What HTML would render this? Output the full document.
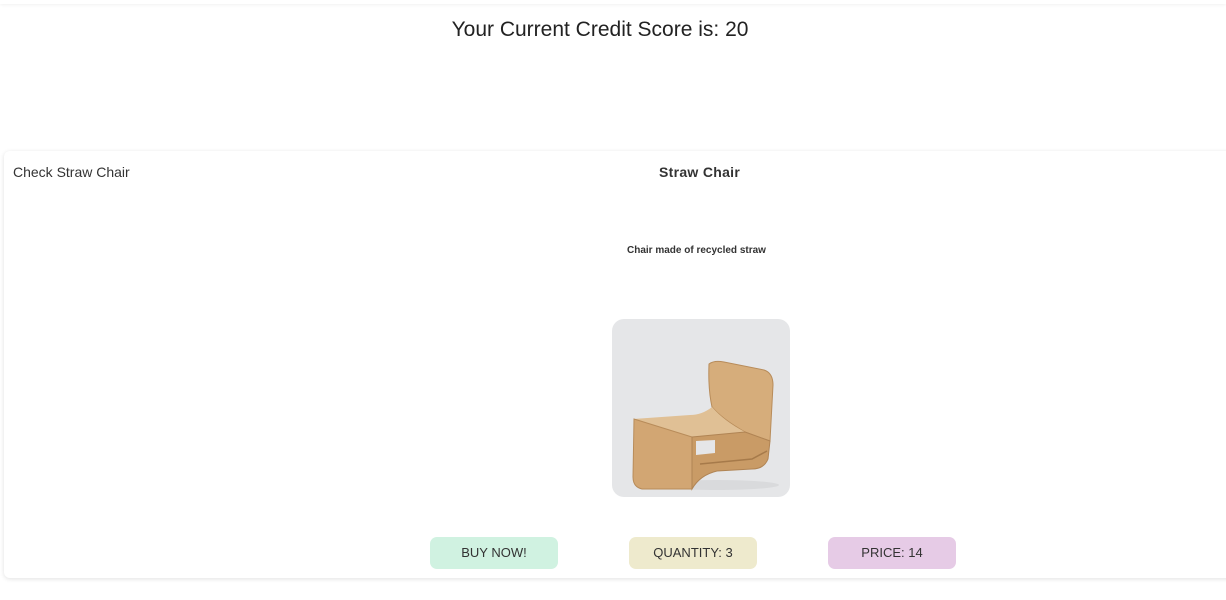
<!DOCTYPE html>
<html><head><meta charset="utf-8"><style>
html,body{margin:0;padding:0;background:#fff;width:1226px;height:600px;overflow:hidden;font-family:"Liberation Sans",sans-serif;color:#222}
.top{position:absolute;left:0;top:0;width:1226px;height:4px;box-shadow:0 1px 3px rgba(0,0,0,.06)}
h1{position:absolute;top:18px;left:0;width:1200px;text-align:center;margin:0;font-weight:normal;font-size:21px;color:#222}
.card{position:absolute;left:4px;top:151px;width:1240px;height:427px;background:#fff;border-radius:6px;box-shadow:0 1px 5px rgba(0,0,0,.12)}
.lbl{position:absolute;left:9px;top:13px;font-size:14px;color:#333}
.title{position:absolute;left:655px;top:13px;font-size:14px;font-weight:bold;color:#333;letter-spacing:.3px}
.desc{position:absolute;left:623px;top:94px;font-size:10px;font-weight:bold;color:#333}
.img{position:absolute;left:608px;top:168px;width:178px;height:178px;border-radius:12px;background:#e5e6e8;overflow:hidden}
.btn{position:absolute;top:386px;width:128px;height:32px;border-radius:7px;font-size:13px;color:#333;text-align:center;line-height:32px}
</style></head><body>
<div class="top"></div>
<h1>Your Current Credit Score is: 20</h1>
<div class="card">
<div class="lbl">Check Straw Chair</div>
<div class="title">Straw Chair</div>
<div class="desc">Chair made of recycled straw</div>
<div class="img"><svg width="178" height="178" viewBox="0 0 178 178">
<ellipse cx="105" cy="166" rx="62" ry="5" fill="#d9dadc"/>
<path d="M97 45 Q102 41 112 43 L152 51 Q161 54 161 66 L158 122 L133 113 Q110 100 100 88 Q96 70 97 45 Z" fill="#d6ad7b" stroke="#b88c5a" stroke-width="1"/>
<path d="M22 100 L78 96 Q90 96 100 88 Q112 102 133 113 L80 118 Z" fill="#e0c095"/>
<path d="M22 100 L80 118 L80 170 L30 170 Q21 168 21 158 Z" fill="#d2a673" stroke="#b88c5a" stroke-width="1"/>
<path d="M80 118 L133 113 L158 122 L156 140 Q152 150 140 150 L105 152 Q88 156 80 170 Z" fill="#c99b66" stroke="#b08454" stroke-width="1"/>
<path d="M84 122 L103 121 L103 134 L84 136 Z" fill="#e5e6e8"/>
<path d="M88 145 L140 140 L155 132" fill="none" stroke="#a67a4a" stroke-width="1.5"/>
</svg></div>
<div class="btn" style="left:426px;background:#d0f2e1">BUY NOW!</div>
<div class="btn" style="left:625px;background:#eeeacd">QUANTITY: 3</div>
<div class="btn" style="left:824px;background:#e6cbe6">PRICE: 14</div>
</div>
</body></html>
